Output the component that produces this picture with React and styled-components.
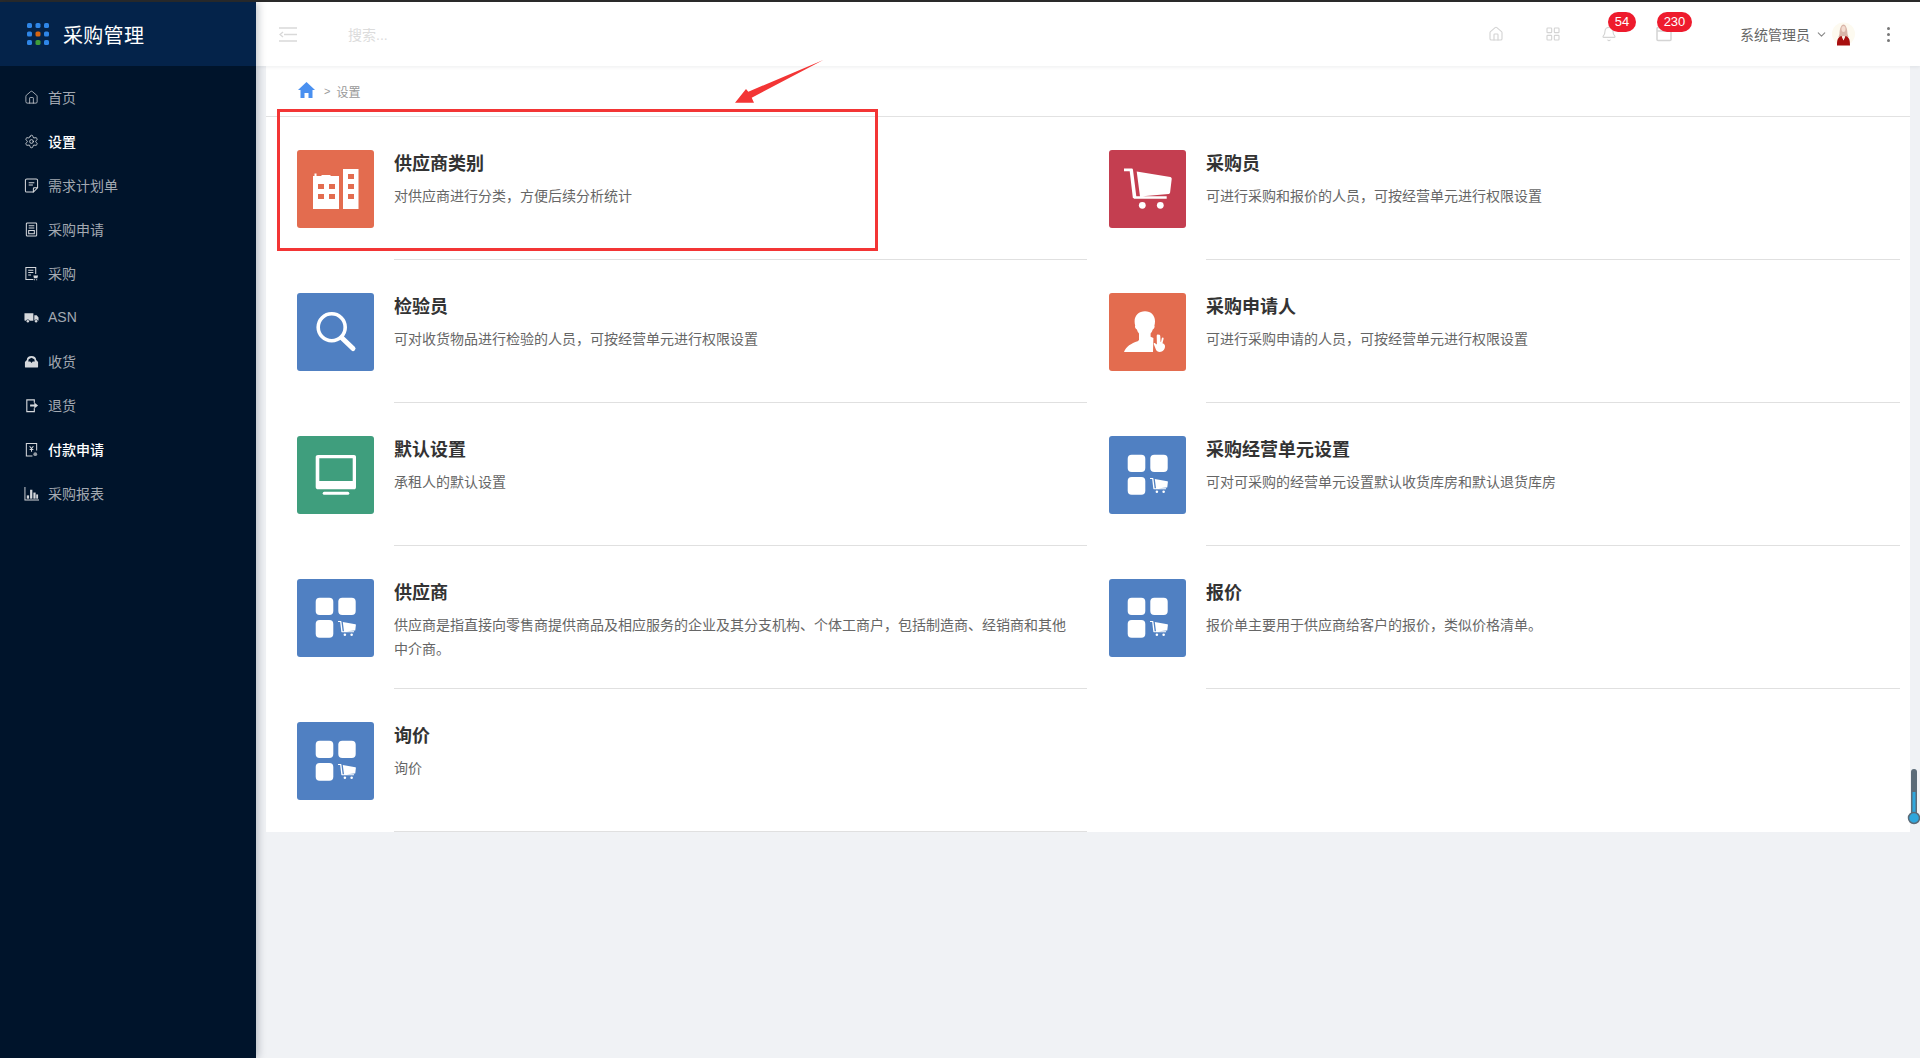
import React from "react";
import styled, { createGlobalStyle } from "styled-components";
import { Home, Settings, LayoutGrid, Bell, ChevronDown } from "lucide-react";

const GlobalStyle = createGlobalStyle`
  html, body { margin: 0; padding: 0; height: 100%; }
  body {
    background: #f0f2f5;
    font-family: "Liberation Sans", "Noto Sans CJK SC", sans-serif;
  }
`;

/////////////////// LAYOUT
const Page = styled.div`
  position: relative;
  display: flex;
  flex-direction: column;
  height: 1058px;
  overflow: hidden;
`;

const TopStrip = styled.div`
  height: 2px;
  background: #2b2b2b;
  flex: none;
`;

const Shell = styled.div`
  display: flex;
  flex: 1;
  min-height: 0;
`;

/////////////////// SIDEBAR
const Sidebar = styled.aside`
  width: 256px;
  flex: none;
  background: #00142b;
  box-shadow: 2px 0 8px rgba(0, 21, 41, 0.25);
  z-index: 2;
`;

const Brand = styled.div`
  height: 64px;
  display: flex;
  align-items: center;
  gap: 14px;
  padding-left: 27px;
  background: #04234a;
  color: #fff;
  font-size: 20px;
  letter-spacing: 0.3px;
`;

const Nav = styled.nav`
  padding-top: 9px;
`;

const NavItem = styled.div`
  height: 44px;
  display: flex;
  align-items: center;
  gap: 9px;
  padding-left: 24px;
  font-size: 14px;
  color: ${(props) => (props.$active ? "#ffffff" : "#a3a9b2")};
  font-weight: ${(props) => (props.$active ? 500 : 400)};

  svg {
    width: 15px;
    height: 15px;
    flex: none;
    color: #d5d8dc;
  }
`;

/////////////////// TOP BAR
const Main = styled.div`
  flex: 1;
  min-width: 0;
  display: flex;
  flex-direction: column;
`;

const TopBar = styled.header`
  height: 64px;
  flex: none;
  display: flex;
  align-items: center;
  background: #fff;
  box-shadow: 0 1px 4px rgba(0, 21, 41, 0.08);
  padding: 0 0 0 23px;
  z-index: 1;
`;

const Search = styled.div`
  margin-left: 51px;
  font-size: 14px;
  color: #dcdcdc;
  flex: 1;
`;

const TopIcon = styled.div`
  position: relative;
  width: 16px;
  height: 16px;
  margin-right: ${(props) => props.$gap}px;
  color: #d4d4d4;

  svg {
    display: block;
    width: 16px;
    height: 16px;
  }
`;

const Badge = styled.span`
  position: absolute;
  top: -14px;
  left: ${(props) => props.$left}px;
  min-width: ${(props) => props.$width}px;
  height: 20px;
  border-radius: 10px;
  background: #ee1b2d;
  color: #fff;
  font-size: 13px;
  line-height: 20px;
  text-align: center;
`;

const User = styled.div`
  display: flex;
  align-items: center;
  font-size: 14px;
  color: #666;

  > svg:first-of-type {
    width: 13px;
    height: 13px;
    margin: 0 4px 0 5px;
    color: #888;
  }
`;

const Kebab = styled.div`
  display: flex;
  flex-direction: column;
  gap: 3px;
  margin-left: 32px;
  margin-right: 30px;

  i {
    display: block;
    width: 3px;
    height: 3px;
    border-radius: 50%;
    background: #777;
  }
`;

/////////////////// CONTENT
const Panel = styled.section`
  margin: 0 10px;
  background: #fff;
`;

const Crumbs = styled.div`
  height: 50px;
  display: flex;
  align-items: center;
  padding-left: 32px;
  border-bottom: 1px solid #e2e2e2;
  font-size: 12px;
  color: #999;

  svg {
    width: 17px;
    height: 16px;
    margin: 0 9px 2px 0;
  }

  b {
    font-weight: 400;
    margin-right: 6px;
    font-size: 11px;
  }
`;

const Grid = styled.div`
  display: grid;
  grid-template-columns: 790px 791px;
  column-gap: 22px;
  padding-left: 31px;
`;

const Item = styled.div`
  display: flex;
  gap: 20px;
`;

const IconBox = styled.div`
  width: 77px;
  height: 78px;
  flex: none;
  margin-top: 33px;
  border-radius: 3px;
  background: ${(props) => props.$color};

  svg {
    display: block;
    width: 77px;
    height: 78px;
  }
`;

const Body = styled.div`
  flex: 1;
  height: 143px;
  box-sizing: border-box;
  padding: 34px 16px 0 0;
  border-bottom: 1px solid #e0e0e0;
`;

const Title = styled.div`
  font-size: 18px;
  line-height: 26px;
  font-weight: 700;
  color: #333;
`;

const Desc = styled.div`
  margin-top: 7px;
  font-size: 14px;
  line-height: 24px;
  color: #666;
`;

/////////////////// OVERLAYS
const RedBox = styled.div`
  position: absolute;
  left: 277px;
  top: 109px;
  width: 601px;
  height: 142px;
  box-sizing: border-box;
  border: 3px solid #f33535;
  pointer-events: none;
  z-index: 3;
`;

const Arrow = styled.svg`
  position: absolute;
  left: 730px;
  top: 55px;
  width: 100px;
  height: 55px;
  z-index: 3;
`;

const Thermo = styled.svg`
  position: absolute;
  left: 1906px;
  top: 766px;
  width: 14px;
  height: 62px;
  z-index: 3;
`;

/////////////////// ICONS
const CART =
  "M15 18.6h7.4c.9 0 1.5.5 1.6 1.4l3.3 26.2h30.4v2.6H25.2c-.8 0-1.3-.4-1.4-1.2L20.7 21.3H15zM27.7 21.5l33.6 5.6c.9.2 1.5.9 1.4 1.8l-1.6 13.6c-.1.9-.7 1.4-1.5 1.5l-28.6 2.6z";

const BuildingIcon = () => (
  <svg viewBox="0 0 77 78">
    <path fill="#fff" d="M16 59V26h1.5v-2.5h2V26h5v-1h9v1H42v33zM46 19h15.5v40H46z" />
    <g fill="#e36c4f">
      <rect x="21" y="34" width="6" height="5" />
      <rect x="32" y="34" width="6" height="5" />
      <rect x="21" y="44" width="6" height="5" />
      <rect x="32" y="44" width="6" height="5" />
      <rect x="51" y="24" width="6" height="5" />
      <rect x="51" y="34" width="6" height="5" />
      <rect x="51" y="44" width="6" height="5" />
    </g>
  </svg>
);

const CartShape = () => (
  <>
    <path d={CART} />
    <circle cx="33.3" cy="55.3" r="3.4" />
    <circle cx="51.3" cy="55.3" r="3.4" />
  </>
);

const CartIcon = () => (
  <svg viewBox="0 0 77 78" fill="#fff">
    <CartShape />
  </svg>
);

const SearchIcon = () => (
  <svg viewBox="0 0 77 78" fill="none" stroke="#fff">
    <circle cx="34.7" cy="34.3" r="13.5" strokeWidth="3.6" />
    <path d="M45 45l11 10.5" strokeWidth="5" strokeLinecap="round" />
  </svg>
);

const UserIcon = () => (
  <svg viewBox="0 0 77 78" fill="#fff">
    <path d="M36 18.3c6 0 10 4 10 10 0 1.5-.2 3-.6 4.5.4.6.2 1.7-.3 2.5-.4.7-.9 1-1.3 1.1-.5 1.7-1.2 3-2.2 4.2v3.2l2.8 1.2L44 59H15c2.2-5.6 7-8.6 13.7-10.8l1.3-1.2v-6.4c-1-1.2-1.7-2.5-2.1-4.2-.5-.1-1-.4-1.4-1.1-.5-.8-.7-1.9-.3-2.5-.4-1.5-.6-3-.6-4.5 0-6 4.4-10 10.4-10z" />
    <path d="M50 41.7c.9 0 1.3.7 1.3 1.5l.2 5.5.5.2.8-3.700c.2-.6.7-.9 1.200-.7.5.2.7.7.6 1.300l-1.100 4.400c1.800.6 2.500 1.700 2.500 3.100 0 3.200-2.300 5.700-5.200 5.700-2 0-3.300-1-4-2.700l-2-5c-.3-.8.400-1.500 1.200-1.100l1.900 1.300-.2-8.600c0-.7.3-1.400 1.300-1.400z" />
  </svg>
);

const MonitorIcon = () => (
  <svg viewBox="0 0 77 78">
    <path
      fill="#fff"
      fillRule="evenodd"
      d="M21 19h36c1.3 0 2 .8 2 2v30c0 1.400-.7 2.300-2 2.300H21c-1.300 0-2.300-.9-2.300-2.300V21c0-1.200 1-2 2.300-2zm1.300 3.300V45h33.400V22.300z"
    />
    <rect x="25.7" y="55.7" width="26.6" height="3" rx="1.5" fill="#fff" />
  </svg>
);

const AppsCartIcon = () => (
  <svg viewBox="0 0 77 78">
    <g fill="#fff">
      <rect x="18.7" y="18.7" width="17.6" height="17.4" rx="4" />
      <rect x="41.3" y="18.7" width="17.4" height="17.4" rx="4" />
      <rect x="18.7" y="41" width="17.6" height="17.7" rx="4" />
      <g transform="translate(35.4 35) scale(0.375)">
        <CartShape />
      </g>
    </g>
  </svg>
);

const DotsLogo = () => {
  const colors = ["#2f86e8", "#2f86e8", "#2f86e8", "#2f86e8", "#d9640f", "#2f86e8", "#2f86e8", "#3f9c3a", "#2f86e8"];
  return (
    <svg width="22" height="22" viewBox="0 0 22 22">
      {colors.map((c, i) => (
        <rect key={i} x={(i % 3) * 8.5} y={Math.floor(i / 3) * 8.5} width="5" height="5" rx="1.6" fill={c} />
      ))}
    </svg>
  );
};

const NoteIcon = () => (
  <svg viewBox="0 0 16 16" fill="none" stroke="currentColor" strokeWidth="1.1">
    <path d="M10 15H3c-.8 0-1.5-.7-1.5-1.500v-11C1.500 1.700 2.200 1 3 1h10c.8 0 1.500.7 1.500 1.500V10.500L10 15v-3.500c0-.6.4-1 1-1h3.500" />
    <path d="M5 5h6M5 7.500h4.500" />
  </svg>
);

const ReceiptIcon = () => (
  <svg viewBox="0 0 16 16" fill="none" stroke="currentColor" strokeWidth="1.1">
    <rect x="2.5" y="1" width="11" height="14" rx="1" />
    <path d="M5 4h6M5 6.500h6M5 9h6v3.500H5z" />
  </svg>
);

const FileCartIcon = () => (
  <svg viewBox="0 0 16 16" fill="none" stroke="currentColor" strokeWidth="1.1">
    <path d="M10 14.500H2V1.500h10.500v7" />
    <path d="M4.500 4.500h5.500M4.500 7h5.500M4.500 9.500h3" />
    <path fill="currentColor" d="M10 10h5l-.8 3h-3.600zM10.700 14.200h1v1h-1zM13 14.200h1v1h-1z" stroke="none" />
  </svg>
);

const TruckIcon = () => (
  <svg viewBox="0 0 16 16" fill="currentColor">
    <path d="M.5 3.500h9.500v8H6a2 2 0 0 0-3.800 0H1.500C.9 11.500.5 11 .5 10.500z" />
    <path d="M11 5.500h2.500l2 2.500v3c0 .3-.2.500-.5.500h-.2a2 2 0 0 0-3.700 0H11z" />
    <circle cx="4.1" cy="12" r="1.3" />
    <circle cx="12.9" cy="12" r="1.3" />
  </svg>
);

const InboxIcon = () => (
  <svg viewBox="0 0 16 16" fill="currentColor">
    <path d="M3 6.500C3 3.500 5 2 8 2s5 1.500 5 4.500l2 2v5c0 .6-.4 1-1 1H2c-.6 0-1-.4-1-1v-5zm1.500 1.500h2.200L8 9.500 9.300 8h2.200L11 5.500 8 4 5 5.500z" fillRule="evenodd" />
  </svg>
);

const ReturnIcon = () => (
  <svg viewBox="0 0 16 16" fill="none" stroke="currentColor" strokeWidth="1.2">
    <path d="M11 5V2H3v12.500h8V11" />
    <path fill="currentColor" stroke="none" d="M6.500 7h4.500V4.800L15 8l-4 3.200V9H6.500z" />
  </svg>
);

const PayIcon = () => (
  <svg viewBox="0 0 16 16" fill="none" stroke="currentColor" strokeWidth="1.1">
    <path d="M9 15H2.500V1.500h11V9" />
    <path d="M6 4.500L8 7l2-2.500M8 7v3.500M6 8h4" />
    <circle cx="12" cy="13" r="2" fill="currentColor" stroke="none" opacity="0.7" />
  </svg>
);

const BarsIcon = () => (
  <svg viewBox="0 0 16 16" fill="currentColor">
    <path d="M.5 1h1v13.500H16v1H.5z" />
    <rect x="3" y="10" width="2.4" height="3.5" />
    <rect x="6.5" y="4" width="2.4" height="9.5" />
    <rect x="10" y="7" width="2.4" height="6.5" />
    <rect x="13" y="9" width="2" height="4.5" />
  </svg>
);

const MenuFold = () => (
  <svg width="18" height="15" viewBox="0 0 18 15" fill="none" stroke="#d9d9d9" strokeWidth="1.4">
    <path d="M0 1h18M5 7.500h13M0 14h18M4 5L1 7.500 4 10" />
  </svg>
);

const BoxIcon = () => (
  <svg viewBox="0 0 16 16" fill="none" stroke="currentColor" strokeWidth="1.5">
    <rect x="1" y="1.5" width="14" height="13" rx="1" />
    <path d="M1 5h14" />
  </svg>
);

const Avatar = () => (
  <svg width="23" height="24" viewBox="0 0 23 24">
    <circle cx="11.5" cy="12" r="11.5" fill="#fdfaf0" />
    <path d="M7.500 12c0-5 1.500-9.500 4-9.500s4 4.500 4 9.500l1 3H6.500z" fill="#d9b5a8" />
    <ellipse cx="11.5" cy="7" rx="2" ry="3" fill="#f3dcd0" />
    <path d="M5 23.500c0-5 .5-8.500 4.500-9.500l2 4.500 2-4.500c4 1 4.500 4.500 4.500 9.500z" fill="#a80f0f" />
    <path d="M10 14l1.500 4 1.500-4z" fill="#fbeee4" />
  </svg>
);

/////////////////// DATA
const NAV = [
  { label: "首页", icon: <Home strokeWidth={1.2} /> },
  { label: "设置", icon: <Settings strokeWidth={1.4} />, active: true },
  { label: "需求计划单", icon: <NoteIcon /> },
  { label: "采购申请", icon: <ReceiptIcon /> },
  { label: "采购", icon: <FileCartIcon /> },
  { label: "ASN", icon: <TruckIcon /> },
  { label: "收货", icon: <InboxIcon /> },
  { label: "退货", icon: <ReturnIcon /> },
  { label: "付款申请", icon: <PayIcon />, active: true },
  { label: "采购报表", icon: <BarsIcon /> },
];

const BLUE = "#5080c2";
const ORANGE = "#e36c4f";

const ITEMS = [
  { title: "供应商类别", desc: "对供应商进行分类，方便后续分析统计", color: ORANGE, icon: <BuildingIcon /> },
  { title: "采购员", desc: "可进行采购和报价的人员，可按经营单元进行权限设置", color: "#c43e50", icon: <CartIcon /> },
  { title: "检验员", desc: "可对收货物品进行检验的人员，可按经营单元进行权限设置", color: BLUE, icon: <SearchIcon /> },
  { title: "采购申请人", desc: "可进行采购申请的人员，可按经营单元进行权限设置", color: ORANGE, icon: <UserIcon /> },
  { title: "默认设置", desc: "承租人的默认设置", color: "#3f9e7d", icon: <MonitorIcon /> },
  { title: "采购经营单元设置", desc: "可对可采购的经营单元设置默认收货库房和默认退货库房", color: BLUE, icon: <AppsCartIcon /> },
  {
    title: "供应商",
    desc: "供应商是指直接向零售商提供商品及相应服务的企业及其分支机构、个体工商户，包括制造商、经销商和其他中介商。",
    color: BLUE,
    icon: <AppsCartIcon />,
  },
  { title: "报价", desc: "报价单主要用于供应商给客户的报价，类似价格清单。", color: BLUE, icon: <AppsCartIcon /> },
  { title: "询价", desc: "询价", color: BLUE, icon: <AppsCartIcon /> },
];

export default function App() {
  return (
    <Page>
      <GlobalStyle />
      <TopStrip />
      <Shell>
        <Sidebar>
          <Brand>
            <DotsLogo />
            采购管理
          </Brand>
          <Nav>
            {NAV.map((n) => (
              <NavItem key={n.label} $active={n.active}>
                {n.icon}
                {n.label}
              </NavItem>
            ))}
          </Nav>
        </Sidebar>

        <Main>
          <TopBar>
            <MenuFold />
            <Search>搜索...</Search>
            <TopIcon $gap={41}>
              <Home strokeWidth={1.7} />
            </TopIcon>
            <TopIcon $gap={40}>
              <LayoutGrid strokeWidth={1.7} />
            </TopIcon>
            <TopIcon $gap={39}>
              <Bell strokeWidth={1.7} />
              <Badge $left={7} $width={28}>54</Badge>
            </TopIcon>
            <TopIcon $gap={68}>
              <BoxIcon />
              <Badge $left={1} $width={35}>230</Badge>
            </TopIcon>
            <User>
              系统管理员
              <ChevronDown />
              <Avatar />
            </User>
            <Kebab>
              <i />
              <i />
              <i />
            </Kebab>
          </TopBar>

          <Panel>
            <Crumbs>
              <svg viewBox="0 0 17 16">
                <path fill="#4a90f0" d="M8.5 0L17 8h-2.500v8h-4v-5h-4v5h-4V8H0z" />
              </svg>
              <b>&gt;</b>
              设置
            </Crumbs>
            <Grid>
              {ITEMS.map((it) => (
                <Item key={it.title}>
                  <IconBox $color={it.color}>{it.icon}</IconBox>
                  <Body>
                    <Title>{it.title}</Title>
                    <Desc>{it.desc}</Desc>
                  </Body>
                </Item>
              ))}
            </Grid>
          </Panel>
        </Main>
      </Shell>

      <RedBox />
      <Arrow viewBox="0 0 100 55">
        <path fill="#f33535" d="M5 47.7L16 34 18.3 36.7 93.3 5 21.7 42.7 24 47.7z" />
      </Arrow>
      <Thermo viewBox="0 0 14 62">
        <rect x="5" y="3" width="6" height="50" rx="3" fill="#5b6b78" />
        <rect x="6.5" y="26" width="3" height="28" fill="#2ea6dc" />
        <circle cx="8" cy="52" r="5.5" fill="#2ea6dc" stroke="#5b6b78" strokeWidth="1.5" />
      </Thermo>
    </Page>
  );
}
